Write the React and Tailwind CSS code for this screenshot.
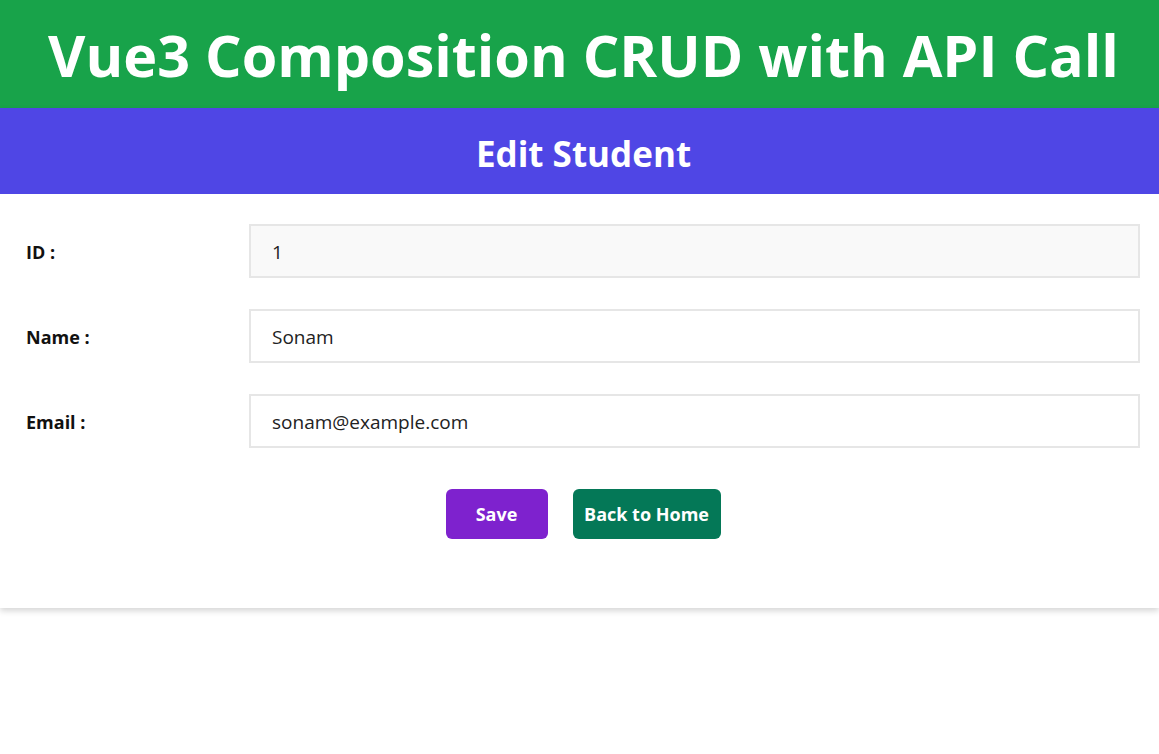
import { useState } from 'react';

const fields = [
  { key: 'id', label: 'ID :', readOnly: true },
  { key: 'name', label: 'Name :' },
  { key: 'email', label: 'Email :' },
];

const EditStudent = () => {
  const [student, setStudent] = useState({
    id: '1',
    name: 'Sonam',
    email: 'sonam@example.com',
  });

  const handleChange = (key) => (e) => {
    setStudent({ ...student, [key]: e.target.value });
  };

  return (
    <div className="shadow-[0_3px_6px_rgba(0,0,0,0.16)]">
      {/* Sub header */}
      <div className="bg-[#4f46e5] h-[86px] flex items-center justify-center pt-[4px] pl-[8px]">
        <h2 className="text-white font-bold text-[35px] leading-none">Edit Student</h2>
      </div>

      {/* Form */}
      <form
        className="pl-[26px] pr-[19px] pt-[30px] pb-[69px] flex flex-col"
        onSubmit={(e) => e.preventDefault()}
      >
        <div className="flex flex-col gap-[31px]">
          {fields.map((field) => (
            <div key={field.key} className="flex items-center">
              <label className="w-[223px] shrink-0 text-[18px] font-bold text-[#111] pt-[2px]">
                {field.label}
              </label>
              <input
                type="text"
                value={student[field.key]}
                readOnly={field.readOnly}
                onChange={handleChange(field.key)}
                className={`flex-1 h-[54px] border-2 border-[#e6e6e6] px-[21px] pt-[2px] text-[19px] text-[#222] outline-none ${
                  field.readOnly ? 'bg-[#f9f9f9]' : 'bg-white'
                }`}
              />
            </div>
          ))}
        </div>

        {/* Actions */}
        <div className="flex justify-center gap-[25px] mt-[41px]">
          <button
            type="submit"
            className="w-[102px] h-[50px] rounded-md bg-[#7e22ce] text-white font-bold text-[18px]"
          >
            Save
          </button>
          <button
            type="button"
            className="w-[148px] h-[50px] rounded-md bg-[#047857] text-white font-bold text-[18px]"
          >
            Back to Home
          </button>
        </div>
      </form>
    </div>
  );
}

export default function App() {
  return (
    <div className="min-h-[754px] bg-white" style={{ fontFamily: '"Open Sans", "Noto Sans", sans-serif' }}>
      {/* Header */}
      <div className="bg-[#18a34a] h-[108px] flex items-center justify-center pt-[4px] pl-[8px]">
        <h1 className="text-white font-bold text-[57.5px] leading-none">
          Vue3 Composition CRUD with API Call
        </h1>
      </div>
      <EditStudent />
    </div>
  );
}
